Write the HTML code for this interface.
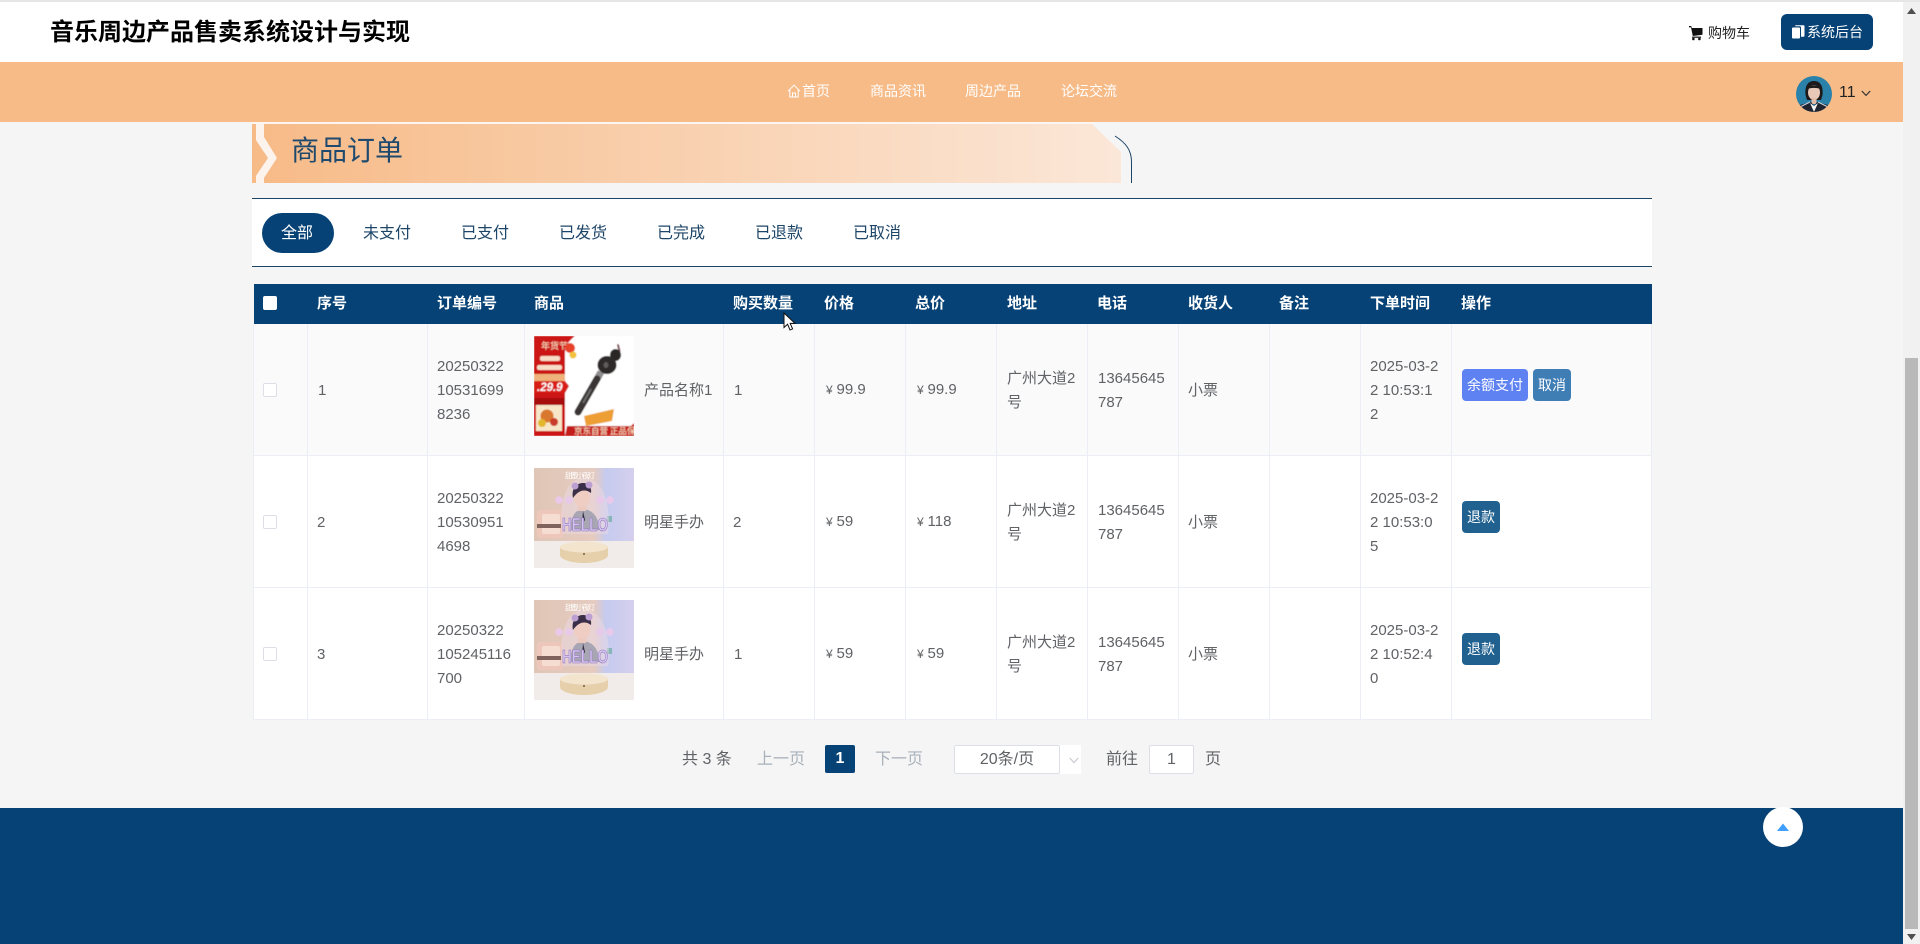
<!DOCTYPE html>
<html lang="zh-CN">
<head>
<meta charset="utf-8">
<title>商品订单</title>
<style>
*{box-sizing:border-box}
html,body{margin:0;padding:0;width:1920px;height:944px;overflow:hidden;background:#f5f5f5}
body{position:relative;font-family:"Liberation Sans","Noto Sans CJK SC",sans-serif;color:#606266}
.a{position:absolute}
.t{position:absolute;white-space:nowrap;font-size:15px;line-height:24px;color:#606266}
.h{position:absolute;white-space:nowrap;font-size:15px;line-height:24px;color:#fff;font-weight:700;top:292px}
.n{position:absolute;white-space:nowrap;font-size:14px;line-height:20px;color:#fff;top:81px}
.tab{position:absolute;white-space:nowrap;font-size:16px;line-height:24px;top:222px;color:#1d4568}
.v{position:absolute;top:324px;width:1px;height:395px;background:#ebeef5}
.l{position:absolute;left:253px;width:1399px;height:1px;background:#ebeef5}
.y{display:inline-block;width:10.5px;font-size:12px}
.b{position:absolute;height:32px;border-radius:4px;color:#fff;font-size:14px;line-height:33px;text-align:center}
.c{position:absolute;left:263px;width:14px;height:14px;background:#fff;border:1px solid #dcdfe6;border-radius:2px}
.p{position:absolute;white-space:nowrap;font-size:16px;line-height:24px;top:748px;color:#606266}
</style>
</head>
<body>
<!-- top header -->
<div class="a" style="left:0;top:0;width:1920px;height:2px;background:#e6e6e6"></div>
<div class="a" style="left:0;top:2px;width:1903px;height:60px;background:#fff"></div>
<div class="a" style="left:50px;top:15px;font-size:24px;line-height:36px;font-weight:700;color:#000;white-space:nowrap">音乐周边产品售卖系统设计与实现</div>
<svg class="a" style="left:1688px;top:25px" width="15" height="16" viewBox="0 0 15 16"><path d="M1 1h2.200L3.800 3H14.500v6.800L4.800 11 3 2.400H1z" fill="#111"/><rect x="4" y="11.600" width="9" height="1.200" fill="#111"/><circle cx="5.400" cy="14" r="1.300" fill="#111"/><circle cx="11.400" cy="14" r="1.300" fill="#111"/></svg>
<div class="a" style="left:1708px;top:23px;font-size:14px;line-height:20px;color:#222;white-space:nowrap">购物车</div>
<div class="a" style="left:1781px;top:14px;width:92px;height:36px;background:#064275;border-radius:6px"></div>
<svg class="a" style="left:1792px;top:25px" width="13" height="14" viewBox="0 0 13 14"><rect x="0" y="2.500" width="8" height="11" rx="1" fill="#fff"/><path d="M3 1.200A1 1 0 0 1 4 .2h7.500a1 1 0 0 1 1 1v9.500a1 1 0 0 1-1 1H9V2.500A1.300 1.300 0 0 0 7.700 1.200z" fill="#fff"/></svg>
<div class="a" style="left:1807px;top:22px;font-size:14px;line-height:20px;color:#fff;white-space:nowrap">系统后台</div>

<!-- nav -->
<div class="a" style="left:0;top:62px;width:1903px;height:60px;background:#f7bb88"></div>
<svg class="a" style="left:787px;top:84px" width="14" height="14" viewBox="0 0 14 14" fill="none" stroke="#fff" stroke-width="1"><path d="M1 7.200 7 1.200l6 6M2.800 6v7h8.400V6M5.500 13V9h3v4"/></svg>
<div class="n" style="left:802px">首页</div>
<div class="n" style="left:870px">商品资讯</div>
<div class="n" style="left:965px">周边产品</div>
<div class="n" style="left:1061px">论坛交流</div>

<!-- avatar -->
<svg class="a" style="left:1796px;top:76px" width="36" height="36" viewBox="0 0 36 36">
<defs><clipPath id="av"><circle cx="18" cy="18" r="18"/></clipPath></defs>
<g clip-path="url(#av)">
<rect width="36" height="36" fill="#2a82aa"/>
<path d="M9.500 19C8.500 9 12.500 5 18 5s9.500 4 8.500 14l-1.500 5H11z" fill="#1d1a1c"/>
<ellipse cx="18" cy="16.500" rx="6" ry="7.500" fill="#e8c8b6"/>
<path d="M11.500 13c2-5 11-5 13 0-4-1.500-9-1.500-13 0z" fill="#1d1a1c"/>
<rect x="15.500" y="22" width="5" height="6" fill="#e0bca9"/>
<path d="M1 36l3-7 11-3 3 4 3-4 11 3 3 7z" fill="#1f2430"/>
<path d="M14 27l4 9 4-9-4 3z" fill="#f2f2f2"/>
<path d="M4 31l10-5M32 31l-10-5" stroke="#cfd3da" stroke-width="1"/>
</g></svg>
<div class="a" style="left:1839px;top:83px;font-size:16px;line-height:20px;color:#222;white-space:nowrap">11</div>
<svg class="a" style="left:1861px;top:90px" width="10" height="7" viewBox="0 0 10 7" fill="none" stroke="#333" stroke-width="1.200"><path d="M.8 1 5 5.400 9.200 1"/></svg>

<!-- banner -->
<svg class="a" style="left:250px;top:120px" width="890" height="66" viewBox="250 120 890 66">
<defs><linearGradient id="bg" x1="0" x2="1" y1="0" y2="0"><stop offset="0" stop-color="#f7bb88"/><stop offset="1" stop-color="#fbe7d8"/></linearGradient></defs>
<rect x="252" y="122" width="842" height="2" fill="#fbf6f1"/>
<path d="M264 124H1092L1121 152V183H264z" fill="url(#bg)"/>
<rect x="252" y="124" width="4" height="59" fill="#f7bb88"/>
<path d="M256 140 268 158 256 176z" fill="#f7bb88"/>
<path d="M256 124H264V137L277 158 264 178V183H256V176L268 158 256 140z" fill="#fbf3ec"/>
<path d="M1115 136C1126 143 1131.500 150 1131.500 162V183" fill="none" stroke="#1d4568" stroke-width="1"/>
</svg>
<div class="a" style="left:291px;top:131px;font-size:28px;line-height:40px;color:#1f4a6e;white-space:nowrap">商品订单</div>

<!-- tabs -->
<div class="a" style="left:252px;top:198px;width:1400px;height:69px;background:#fff;border-top:1px solid #1d4568;border-bottom:1px solid #1d4568"></div>
<div class="a" style="left:262px;top:213px;width:72px;height:40px;border-radius:20px;background:#064275"></div>
<div class="tab" style="left:281px;color:#fff">全部</div>
<div class="tab" style="left:363px">未支付</div>
<div class="tab" style="left:461px">已支付</div>
<div class="tab" style="left:559px">已发货</div>
<div class="tab" style="left:657px">已完成</div>
<div class="tab" style="left:755px">已退款</div>
<div class="tab" style="left:853px">已取消</div>

<!-- table -->
<div class="a" style="left:253px;top:324px;width:1399px;height:395px;background:#fff"></div>
<div class="a" style="left:254px;top:324px;width:1398px;height:131px;background:#fafafa"></div>
<div class="a" style="left:254px;top:284px;width:1398px;height:40px;background:#064275"></div>
<div class="v" style="left:253px"></div><div class="v" style="left:307px"></div><div class="v" style="left:427px"></div><div class="v" style="left:524px"></div><div class="v" style="left:723px"></div><div class="v" style="left:814px"></div><div class="v" style="left:905px"></div><div class="v" style="left:996px"></div><div class="v" style="left:1087px"></div><div class="v" style="left:1178px"></div><div class="v" style="left:1269px"></div><div class="v" style="left:1360px"></div><div class="v" style="left:1451px"></div><div class="v" style="left:1651px"></div>
<div class="l" style="top:455px"></div><div class="l" style="top:587px"></div><div class="l" style="top:719px"></div>

<div class="c" style="top:296px;border-color:#fff"></div>
<div class="h" style="left:317px">序号</div>
<div class="h" style="left:437px">订单编号</div>
<div class="h" style="left:534px">商品</div>
<div class="h" style="left:733px">购买数量</div>
<div class="h" style="left:824px">价格</div>
<div class="h" style="left:915px">总价</div>
<div class="h" style="left:1007px">地址</div>
<div class="h" style="left:1097px">电话</div>
<div class="h" style="left:1188px">收货人</div>
<div class="h" style="left:1279px">备注</div>
<div class="h" style="left:1370px">下单时间</div>
<div class="h" style="left:1461px">操作</div>

<!-- row 1 -->
<div class="c" style="top:383px"></div>
<div class="t" style="left:318px;top:379px">1</div>
<div class="t" style="left:437px;top:355px">20250322<br>10531699<br>8236</div>
<svg class="a" style="left:534px;top:336px" width="100" height="100" viewBox="0 0 100 100">
<defs><filter id="s1" x="-5%" y="-5%" width="110%" height="110%"><feGaussianBlur stdDeviation=".4"/></filter></defs>
<g filter="url(#s1)">
<rect width="100" height="100" fill="#fff"/>
<path d="M0 0H41C36 4 31 9 31 16V100H0z" fill="#cc1717"/>
<rect x="0" y="38" width="31" height="7" fill="#eeb27a"/>
<path d="M0 45H31L35 50 31 57H0z" fill="#d81e18"/>
<rect x="0" y="62" width="31" height="7" fill="#a8090f"/>
<rect x="2" y="69" width="26" height="26" fill="#f7e6c8"/>
<circle cx="13" cy="80" r="6.500" fill="#d9772e"/><circle cx="8" cy="87" r="4" fill="#e3b72f"/><circle cx="20" cy="86" r="4" fill="#c93a2a"/>
<rect x="6" y="20" width="20" height="5" rx="2" fill="#f7dcc8"/><rect x="3" y="29" width="25" height="5" rx="2" fill="#f7dcc8"/>
<text x="7" y="13" font-size="9" fill="#fbe9c9" font-family="Noto Sans CJK SC">年货节</text>
<text x="3" y="55" font-size="11.500" font-weight="700" font-style="italic" fill="#fff" font-family="Liberation Sans">.29.9</text>
<circle cx="36" cy="12" r="5" fill="#e8432a"/><circle cx="39" cy="19" r="3.500" fill="#f2c23a"/>
<path d="M84 9 85.500 15" stroke="#7a4a55" stroke-width="2" stroke-linecap="round"/>
<ellipse cx="81.500" cy="19" rx="5.500" ry="6" fill="#2a2628"/>
<ellipse cx="73" cy="29" rx="9.500" ry="9" fill="#2d292b"/>
<ellipse cx="72" cy="29" rx="2.500" ry="3" fill="#5e5a5c"/>
<path d="M67 36 63 43" stroke="#8f8c8e" stroke-width="7"/>
<path d="M63 43 44 76" stroke="#3a3436" stroke-width="7" stroke-linecap="round"/>
<path d="M57 53 49 67" stroke="#6d6a6b" stroke-width="2"/>
<path d="M50 80 80 73 78 85 52 90z" fill="#ed9f35"/>
<path d="M33 90H97L100 87V100H31z" fill="#c51d1a"/>
<text x="40" y="98" font-size="8.500" fill="#fde7c8" font-family="Noto Sans CJK SC">京东自营 正品保障</text>
</g>
</svg>
<div class="t" style="left:644px;top:379px">产品名称1</div>
<div class="t" style="left:734px;top:379px">1</div>
<div class="t" style="left:826px;top:378px"><span class="y">¥</span>99.9</div>
<div class="t" style="left:917px;top:378px"><span class="y">¥</span>99.9</div>
<div class="t" style="left:1007px;top:367px">广州大道2<br>号</div>
<div class="t" style="left:1098px;top:367px">13645645<br>787</div>
<div class="t" style="left:1188px;top:379px">小票</div>
<div class="t" style="left:1370px;top:355px">2025-03-2<br>2 10:53:1<br>2</div>
<div class="b" style="left:1462px;top:369px;width:66px;background:#5f82f3">余额支付</div>
<div class="b" style="left:1533px;top:369px;width:38px;background:#3f7db5">取消</div>

<!-- row 2 -->
<div class="c" style="top:515px"></div>
<div class="t" style="left:317px;top:511px">2</div>
<div class="t" style="left:437px;top:487px">20250322<br>10530951<br>4698</div>
<svg class="a" style="left:534px;top:468px" width="100" height="100" viewBox="0 0 100 100">
<defs>
<linearGradient id="ph" x1="0" x2="1" y1="0" y2="0"><stop offset="0" stop-color="#dfc6b6"/><stop offset=".6" stop-color="#e6cbc0"/><stop offset=".72" stop-color="#c5cbef"/><stop offset="1" stop-color="#d6cfee"/></linearGradient>
<filter id="s2" x="-5%" y="-5%" width="110%" height="110%"><feGaussianBlur stdDeviation=".25"/></filter>
<g id="lamp" filter="url(#s2)">
<rect width="100" height="100" fill="url(#ph)"/>
<rect x="0" y="73" width="100" height="27" fill="#f1ecea"/>
<rect x="3" y="42" width="26" height="28" rx="3" fill="#eec7bb"/>
<rect x="8" y="46" width="18" height="20" rx="2" fill="#f5ddd2"/>
<rect x="3" y="56" width="24" height="4" fill="#7f635c"/>
<rect x="73" y="48" width="5" height="6" fill="#88b6b8"/>
<path d="M28 66C24 30 34 10 50 10s28 20 24 56z" fill="#ead9e6" opacity=".5"/>
<path d="M36 62C37 48 41 42 49 41c9 1 15 6 17 21z" fill="#a9a6b4"/>
<rect x="44" y="37" width="8" height="6" fill="#eccabf"/>
<ellipse cx="48" cy="29" rx="8" ry="10" fill="#f0cdc3"/>
<path d="M39 30c-2-10 4-15 10-15 6 0 9 5 8 10-5-4-12-4-18 5z" fill="#3a2f48"/>
<circle cx="41" cy="18" r="3.500" fill="#bda0d2"/><circle cx="55" cy="17" r="3.500" fill="#bda0d2"/>
<path d="M49 43l2 9-3 4z" fill="#2f2a3c"/>
<g fill="#e9c9ea"><circle cx="25" cy="32" r="3.800"/><circle cx="35" cy="32" r="3.800"/><circle cx="66" cy="32" r="3.800"/><circle cx="76" cy="32" r="3.800"/></g>
<text x="28" y="63" font-size="18" font-weight="700" fill="#d5c4ee" stroke="#8f74bd" stroke-width=".6" font-family="Liberation Sans" textLength="46" lengthAdjust="spacingAndGlyphs">HELLO</text>
<ellipse cx="50" cy="87" rx="24" ry="8" fill="#e6cfab"/>
<rect x="26" y="79" width="48" height="8" fill="#e6cfab"/>
<ellipse cx="50" cy="79" rx="24" ry="5.500" fill="#f3e4cd"/>
<circle cx="50" cy="86" r="1" fill="#6d5b45"/>
<text x="31" y="10" font-size="7.500" fill="#fff" font-family="Noto Sans CJK SC" textLength="30">甜蜜小夜灯</text>
</g>
</defs>
<use href="#lamp"/>
</svg>
<div class="t" style="left:644px;top:511px">明星手办</div>
<div class="t" style="left:733px;top:511px">2</div>
<div class="t" style="left:826px;top:510px"><span class="y">¥</span>59</div>
<div class="t" style="left:917px;top:510px"><span class="y">¥</span>118</div>
<div class="t" style="left:1007px;top:499px">广州大道2<br>号</div>
<div class="t" style="left:1098px;top:499px">13645645<br>787</div>
<div class="t" style="left:1188px;top:511px">小票</div>
<div class="t" style="left:1370px;top:487px">2025-03-2<br>2 10:53:0<br>5</div>
<div class="b" style="left:1462px;top:501px;width:38px;background:#21618f">退款</div>

<!-- row 3 -->
<div class="c" style="top:647px"></div>
<div class="t" style="left:317px;top:643px">3</div>
<div class="t" style="left:437px;top:619px">20250322<br>105245116<br>700</div>
<svg class="a" style="left:534px;top:600px" width="100" height="100" viewBox="0 0 100 100"><use href="#lamp"/></svg>
<div class="t" style="left:644px;top:643px">明星手办</div>
<div class="t" style="left:734px;top:643px">1</div>
<div class="t" style="left:826px;top:642px"><span class="y">¥</span>59</div>
<div class="t" style="left:917px;top:642px"><span class="y">¥</span>59</div>
<div class="t" style="left:1007px;top:631px">广州大道2<br>号</div>
<div class="t" style="left:1098px;top:631px">13645645<br>787</div>
<div class="t" style="left:1188px;top:643px">小票</div>
<div class="t" style="left:1370px;top:619px">2025-03-2<br>2 10:52:4<br>0</div>
<div class="b" style="left:1462px;top:633px;width:38px;background:#21618f">退款</div>

<!-- cursor -->
<svg class="a" style="left:783px;top:312px" width="14" height="20" viewBox="0 0 14 20"><path d="M1 1V15.500L4.600 12.200 7 18 9.600 16.900 7.200 11.400H12z" fill="#fff" stroke="#111" stroke-width="1"/></svg>

<!-- pagination -->
<div class="p" style="left:682px">共 3 条</div>
<div class="p" style="left:757px;color:#a8b1ba">上一页</div>
<div class="a" style="left:825px;top:745px;width:30px;height:28px;background:#064275;border-radius:2px;color:#fff;font-size:16px;font-weight:700;line-height:28px;text-align:center">1</div>
<div class="p" style="left:875px;color:#a8b1ba">下一页</div>
<div class="a" style="left:954px;top:745px;width:127px;height:29px;background:#fff"></div>
<div class="a" style="left:954px;top:745px;width:106px;height:29px;background:#fff;border:1px solid #dcdfe6;border-radius:2px;font-size:16px;line-height:28px;text-align:center;color:#606266">20条/页</div>
<svg class="a" style="left:1069px;top:757px" width="10" height="7" viewBox="0 0 10 7" fill="none" stroke="#c0c4cc" stroke-width="1"><path d="M.8 1 5 5.600 9.200 1"/></svg>
<div class="p" style="left:1106px">前往</div>
<div class="a" style="left:1149px;top:745px;width:45px;height:29px;background:#fff;border:1px solid #dcdfe6;border-radius:2px;font-size:16px;line-height:28px;text-align:center;color:#606266">1</div>
<div class="p" style="left:1205px">页</div>

<!-- footer -->
<div class="a" style="left:0;top:808px;width:1903px;height:136px;background:#064275"></div>
<div class="a" style="left:1763px;top:807px;width:40px;height:40px;border-radius:50%;background:#fff"></div>
<svg class="a" style="left:1777px;top:823px" width="12" height="8" viewBox="0 0 12 8"><path d="M6 .5 12 8H0z" fill="#409eff"/></svg>

<!-- scrollbar -->
<div class="a" style="left:1903px;top:2px;width:17px;height:942px;background:#f1f1f1"></div>
<div class="a" style="left:1905px;top:358px;width:13px;height:571px;background:#b9b9b9"></div>
<svg class="a" style="left:1907px;top:8px" width="9" height="6" viewBox="0 0 9 6"><path d="M4.500 0 9 6H0z" fill="#505050"/></svg>
<svg class="a" style="left:1907px;top:934px" width="9" height="6" viewBox="0 0 9 6"><path d="M0 0H9L4.500 6z" fill="#505050"/></svg>
</body>
</html>
